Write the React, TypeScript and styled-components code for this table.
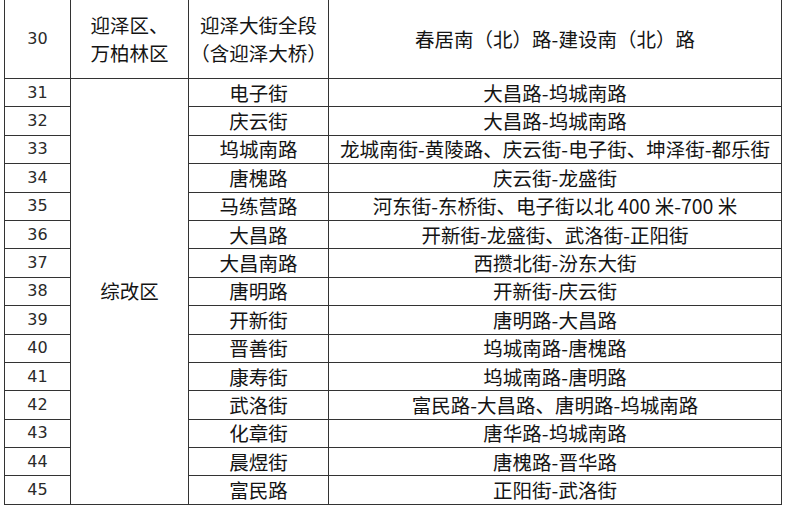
import React from "react";
import styled, { createGlobalStyle } from "styled-components";

interface RowData {
  no: number;
  street: string;
  range: string;
}

const rows: RowData[] = [
  { no: 31, street: "电子街", range: "大昌路-坞城南路" },
  { no: 32, street: "庆云街", range: "大昌路-坞城南路" },
  { no: 33, street: "坞城南路", range: "龙城南街-黄陵路、庆云街-电子街、坤泽街-都乐街" },
  { no: 34, street: "唐槐路", range: "庆云街-龙盛街" },
  { no: 35, street: "马练营路", range: "河东街-东桥街、电子街以北 400 米-700 米" },
  { no: 36, street: "大昌路", range: "开新街-龙盛街、武洛街-正阳街" },
  { no: 37, street: "大昌南路", range: "西攒北街-汾东大街" },
  { no: 38, street: "唐明路", range: "开新街-庆云街" },
  { no: 39, street: "开新街", range: "唐明路-大昌路" },
  { no: 40, street: "晋善街", range: "坞城南路-唐槐路" },
  { no: 41, street: "康寿街", range: "坞城南路-唐明路" },
  { no: 42, street: "武洛街", range: "富民路-大昌路、唐明路-坞城南路" },
  { no: 43, street: "化章街", range: "唐华路-坞城南路" },
  { no: 44, street: "晨煜街", range: "唐槐路-晋华路" },
  { no: 45, street: "富民路", range: "正阳街-武洛街" },
];

const GlobalStyle = createGlobalStyle`
  html, body {
    margin: 0;
    padding: 0;
    background: #ffffff;
    overflow: hidden;
  }
`;

export default function App() {
  return (
    <>
      <GlobalStyle />
      <Page>
        <Table>
          <colgroup>
            <col style={{ width: 66 }} />
            <col style={{ width: 118 }} />
            <col style={{ width: 140 }} />
            <col />
          </colgroup>
          <tbody>
            <HeadRow>
              <NumCell>30</NumCell>
              <Cell>
                迎泽区、
                <br />
                万柏林区
              </Cell>
              <Cell>
                迎泽大街全段
                <br />
                （含迎泽大桥）
              </Cell>
              <Cell>春居南（北）路-建设南（北）路</Cell>
            </HeadRow>
            {rows.map((row, i) => (
              <BodyRow key={row.no}>
                <NumCell>{row.no}</NumCell>
                {i === 0 && <Cell rowSpan={rows.length}>综改区</Cell>}
                <Cell>{row.street}</Cell>
                <Cell>{row.range}</Cell>
              </BodyRow>
            ))}
          </tbody>
        </Table>
      </Page>
    </>
  );
}

const Page = styled.div`
  width: 787px;
  height: 510px;
  padding: 0 5px 0 4px;
  box-sizing: border-box;
  overflow: hidden;
`;

const Table = styled.table`
  width: 778px;
  margin-top: -1px;
  border-collapse: collapse;
  table-layout: fixed;
  font-family: "Noto Sans CJK SC", "Noto Sans", sans-serif;
  font-size: 19.5px;
  color: #141414;
`;

const HeadRow = styled.tr`
  height: 79px;
  line-height: 28px;
`;

const BodyRow = styled.tr`
  height: 28.4px;
  line-height: 26px;
`;

const Cell = styled.td`
  border: 1px solid #333333;
  padding: 0;
  text-align: center;
  vertical-align: middle;
  white-space: nowrap;
`;

const NumCell = styled(Cell)`
  font-family: "DejaVu Sans", "Noto Sans", sans-serif;
  font-size: 16px;
  color: #2a2a2a;
`;
